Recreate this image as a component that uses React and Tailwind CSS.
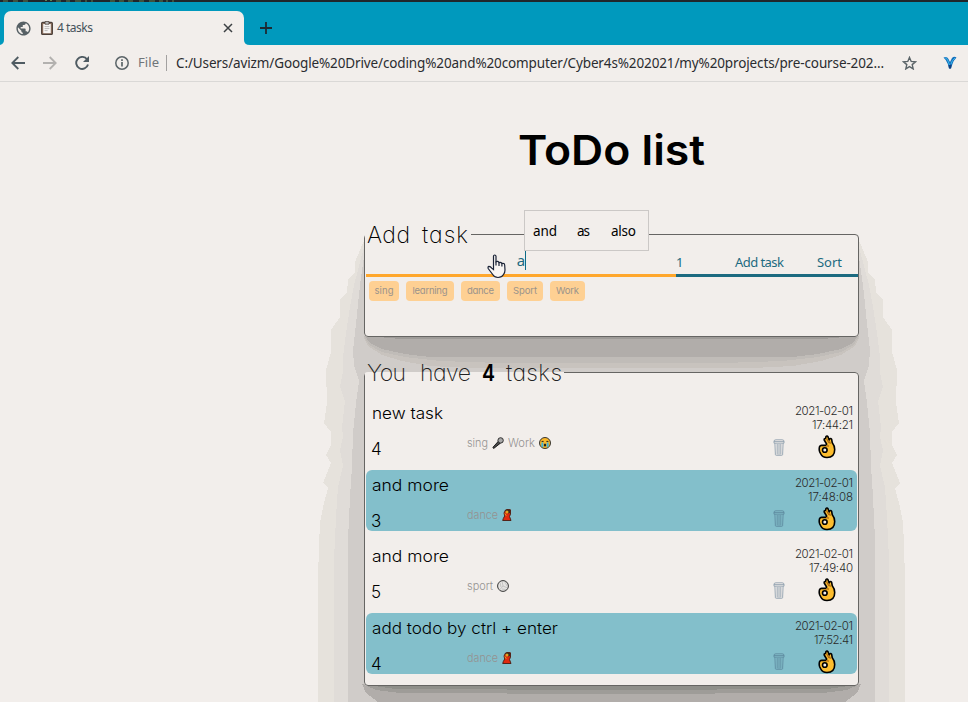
import { useLayoutEffect, useRef } from "react";
import { MdPublic } from "react-icons/md";

// Text that spreads its letters to fill a fixed width.
function Fit({ w, className = "", children }) {
  const ref = useRef(null);
  useLayoutEffect(() => {
    const el = ref.current;
    el.style.width = "auto";
    el.style.letterSpacing = "0px";
    const natural = el.getBoundingClientRect().width;
    const gaps = Math.max(1, el.textContent.length - 1);
    el.style.letterSpacing = `${(w - natural) / gaps}px`;
    el.style.width = `${w}px`;
  }, [w, children]);
  return (
    <span ref={ref} className={`inline-block shrink-0 whitespace-nowrap ${className}`}>
      {children}
    </span>
  );
}

// Text whose glyphs are widened to fill a fixed width.
function Wide({ w, className = "", children }) {
  const ref = useRef(null);
  useLayoutEffect(() => {
    const el = ref.current;
    el.style.transform = "none";
    el.style.width = "auto";
    const natural = el.getBoundingClientRect().width;
    el.style.width = `${natural}px`;
    el.style.marginRight = `${w - natural}px`;
    el.style.transform = `scaleX(${w / natural})`;
  }, [w, children]);
  return (
    <span ref={ref} className={`inline-block shrink-0 origin-left whitespace-nowrap ${className}`}>
      {children}
    </span>
  );
}

function Clipboard() {
  return (
    <svg className="h-[14px] w-[12px] shrink-0" viewBox="0 0 12 14">
      <rect x=".6" y="1.4" width="10.8" height="12" rx="1" fill="#8d6f5d" stroke="#4a3f39" strokeWidth="1.1" />
      <path d="M2.2 3h7.600v9.200H2.200z" fill="#f7f5f3" />
      <path d="M3.600 5.600h4.800M3.600 7.600h4.800M3.600 9.600h3" stroke="#b5b3b1" strokeWidth=".9" />
      <path d="M4 .6h4v2.600H4z" fill="#c5c5c5" stroke="#4a3f39" strokeWidth=".8" />
    </svg>
  );
}

function Trash() {
  return (
    <svg className="h-[17px] w-[12px] opacity-60" viewBox="0 0 12 17" fill="none" stroke="#3f607c" strokeWidth=".8">
      <path d="M1 2.2Q1 .8 3 .8h6q2 0 2 1.4v2H1zM1 2.6h10M1.9 4.4l.5 11.2q0 .7 1 .7h5.2q1 0 1-.7l.5-11.2M4.2 5v10.5M6 5v10.8M7.8 5v10.5" />
    </svg>
  );
}

function OkHand() {
  return (
    <svg className="h-[24px] w-[18px]" viewBox="0 0 18 24">
      <path
        d="M8 1.500Q9 .3 10 1.800L11.200 5l.4-1Q12.700 3 13.600 4.200l.7 3.600q2.400 3 2.400 6.700 0 8-7.700 8-4.600 0-6.200-3.500L1.600 16.600q-.8-2.400 0-5 .5-1.200 2-1.200h4.600L8.600 9 6.200 5Q6 3.400 7.500 3.500z"
        fill="#fdbd2e" stroke="#000" strokeWidth="1.600" strokeLinejoin="round"
      />
      <path d="M8.600 3.800 11 8M11.400 6.200l1 2.600M8 10.600l3 .6" stroke="#b06a12" strokeWidth="1.300" fill="none" />
      <circle cx="6.800" cy="15" r="2.300" fill="#f1edea" stroke="#000" strokeWidth="1.600" />
    </svg>
  );
}

function Mic() {
  return (
    <svg className="size-[12px]" viewBox="0 0 12 12">
      <path d="M7 3.600 1 10.200q-.3 1 .8 1.200L8.600 6z" fill="#4b4b4b" stroke="#111" strokeWidth=".9" />
      <circle cx="8.600" cy="3.400" r="2.700" fill="#a9a9a9" stroke="#222" strokeWidth=".9" />
    </svg>
  );
}

function Cry() {
  return (
    <svg className="size-[12px]" viewBox="0 0 12 12">
      <circle cx="6" cy="6" r="5.500" fill="#fbb829" stroke="#222" strokeWidth=".9" />
      <path d="M2.600 4.400h2M7.400 4.400h2" stroke="#222" strokeWidth="1" />
      <path d="M2.400 5.400h1.900v5.200L2.400 9.800zM7.700 5.400h1.900v4.400l-1.900.8z" fill="#3bb5df" />
      <ellipse cx="6" cy="8" rx="1.200" ry="1.600" fill="#222" />
    </svg>
  );
}

function Dancer() {
  return (
    <svg className="h-[12px] w-[10px]" viewBox="0 0 10 12">
      <path d="M.7 11.500q.3-2 2-4.500L2 4l1.500-3Q6.200-.2 8.500.8V5L7.500 7.500l1.500 4z" fill="#e0290f" stroke="#4a1a10" strokeWidth=".9" />
      <path d="M3 1.800q2-2.400 5-.6v2.800L6 4.600z" fill="#3a2b1c" />
      <circle cx="5" cy="2.900" r="1.500" fill="#e6a31e" />
      <path d="m2.800 4.600 1.500 2.200" stroke="#e6a31e" />
    </svg>
  );
}

function Ball() {
  return (
    <svg className="size-[12px]" viewBox="0 0 12 12" fill="none">
      <circle cx="6" cy="6" r="5.400" fill="#e6e4e2" stroke="#333" />
      <path d="M6 6 5 1M6 6l4.500 2M6 6l-3.500 4M3 2.500 4 7M8 2l2 4M9 9.500 5 9" stroke="#b5b5b5" strokeWidth=".7" />
    </svg>
  );
}

const OUTER =
  "M365 238 355 262 355 272 348 280 347 292 340 300 340 317 331 330 331 352 326 370 327 403 324 423 331 432 331 445 326 455 331 463 323 483 328 488 323 507 320 523 319 545 318 580 318 702 612 702 612 238z";
const MIDDLE =
  "M365 243 358 270 354 285 350 307 346 333 343 357 343 372 340 387 345 401 342 427 343 437 340 450 343 466 338 487 336 517 334 560 334 702 612 702 612 243z";
const INNER =
  "M365 250 360 285 355 333 353 350 354 365 359 381 356 403 353 433 352 466 350 497 348 540 348 702 612 702 612 250z";

function ShadowHalf() {
  return (
    <>
      <path d={OUTER} fill="#e6e2dc" />
      <path d={MIDDLE} fill="#e0dcd8" />
      <path d={INNER} fill="#d0ccc9" />
      <path d="M364 338 368 346 382 355 402 361 430 366 470 368 612 368V336H364z" fill="#c8c3be" />
      <path d="M364 336 369 345 382 352 405 357 440 361 500 363 612 363V336z" fill="#c0bcb8" />
      <path d="M365 336 370 343 382 349 405 354 430 357 612 357V336z" fill="#b1adaa" />
      <path d="M368 336 400 339 612 339.500V336z" fill="#9e9b98" />
      <path d="M362 684 366 693 378 702H612V684z" fill="#b1adaa" />
      <path d="M365 685 376 690 400 693 612 694V685z" fill="#9e9c98" />
      <path d="M368 685 395 689 612 690V685z" fill="#8f8f8a" />
    </>
  );
}

function Shadows() {
  return (
    <svg className="absolute left-0 top-0 h-[702px] w-[968px]" viewBox="0 0 968 702" shapeRendering="crispEdges">
      <ShadowHalf />
      <g transform="translate(1223 0) scale(-1 1)">
        <ShadowHalf />
      </g>
    </svg>
  );
}

function Browser() {
  return (
    <header className="relative font-['Noto_Sans',sans-serif]">
      <div className="flex h-[2px] bg-[#20262b]">
        <svg className="h-[2px] w-[180px]" viewBox="0 0 180 2" stroke="#5f7f52" strokeWidth="1.200">
          <path d="M3 1h5M13 1h5M23 1h5M45 .5h2M50 .5h2M56 1h5M66 1h4M75 1h6M85 1h2M91 1h2M110 1h5M119 1h5M128 1h5M139 1h5M149 1h6M159 1h4M166 1h2M172 1h2" />
        </svg>
      </div>
      <div className="flex h-[43px] items-end bg-[#0099bd]">
        <svg className="h-[5px] w-[4px]" viewBox="0 0 4 5"><path d="M4 0Q4 4 0 5h4z" fill="#f2eeeb" /></svg>
        <div className="flex h-[34px] w-[240px] items-center rounded-t-[7px] bg-[#f2eeeb] pl-[11px] pr-[11px]">
          <MdPublic className="size-[17px] shrink-0 text-[#566065]" />
          <div className="ml-[9px] flex"><Clipboard /></div>
          <Fit w={36} className="ml-[4px] text-[12px] leading-4 text-[#45525a]">4 tasks</Fit>
          <svg className="ml-auto size-[10px]" viewBox="0 0 10 10"><path d="m1 1 8 8M9 1 1 9" stroke="#3c4043" strokeWidth="1.500" /></svg>
        </div>
        <svg className="h-[5px] w-[6px]" viewBox="0 0 6 5"><path d="M0 0Q0 5 6 5H0z" fill="#f2eeeb" /></svg>
        <svg className="mb-[11px] ml-[10px] size-[12px]" viewBox="0 0 12 12"><path d="M6 0v12M0 6h12" stroke="#1c2b33" strokeWidth="1.800" /></svg>
      </div>
      <div className="flex h-[37px] items-center border-b border-[#dad8d6] bg-[#f2eeeb] pl-[11px] text-[13px]">
        <svg className="size-[14px]" viewBox="0 0 14 14" fill="none" stroke="#4f5b62" strokeWidth="1.800"><path d="M14 7H1.500M7.300 1 1.300 7l6 6" /></svg>
        <svg className="ml-[18px] size-[14px]" viewBox="0 0 14 14" fill="none" stroke="#b3b1af" strokeWidth="1.800"><path d="M0 7h12.500M6.700 1l6 6-6 6" /></svg>
        <svg className="ml-[18px] size-[14px]" viewBox="0 0 14 14" fill="none"><path d="M12 3.300A6 6 0 1 0 13 8.500" stroke="#4f5b62" strokeWidth="1.900" /><path d="M14 0v6H8z" fill="#4f5b62" /></svg>
        <svg className="ml-[26px] size-[14px]" viewBox="0 0 14 14" fill="none" stroke="#5b6468" strokeWidth="1.500"><circle cx="7" cy="7" r="6.200" /><path d="M7 6v4.500M7 3.300v1.600" strokeWidth="1.700" /></svg>
        <Fit w={21} className="ml-[9px] text-[#6f7579]">File</Fit>
        <div className="ml-[7px] h-[16px] w-px bg-[#a3a1a0]" />
        <Fit w={708} className="ml-[9px] text-[13.500px] text-[#2a2c30]">
          C:/Users/avizm/Google%20Drive/coding%20and%20computer/Cyber4s%202021/my%20projects/pre-course-202...
        </Fit>
        <svg className="ml-[18px] h-[14px] w-[15px]" viewBox="0 0 15 14" fill="none" stroke="#5b6468" strokeWidth="1.400"><path d="m7.500 1.400 1.700 4 4.300.4-3.300 2.800 1 4.300-3.700-2.300-3.700 2.300 1-4.300L1.500 5.800l4.300-.4z" /></svg>
        <svg className="ml-[26px] size-[14px]" viewBox="0 0 14 14"><path d="M.5 1.500Q4 0 5.500 3L7 6l2-4q2-2 4.500-.5Q10 5 9.300 8.500L8 12.500H6L4.800 8Q3.500 4 .5 1.500z" fill="#1670bd" /><path d="M2 1.800Q4 2 5 5l1.500 4M12 2Q9 4 8 8" stroke="#39b7ea" fill="none" /><path d="M5.500 9h3L8 12.500H6z" fill="#123f7c" /></svg>
      </div>
    </header>
  );
}

const CHIPS = [
  { name: "sing", box: "w-[30px]", w: 19 },
  { name: "learning", box: "w-[48px]", w: 35 },
  { name: "dance", box: "w-[39px]", w: 27 },
  { name: "Sport", box: "w-[36px]", w: 24 },
  { name: "Work", box: "w-[35px]", w: 23 },
];

const TASKS = [
  { title: "new task", w: 71, n: "4", time: "17:44:21", tw: 41, tags: [["sing", 21, Mic], ["Work", 27, Cry]], tone: "" },
  { title: "and more", w: 77, n: "3", time: "17:48:08", tw: 45, tags: [["dance", 31, Dancer]], tone: "bg-[#83bfcb]" },
  { title: "and more", w: 77, n: "5", time: "17:49:40", tw: 44, tags: [["sport", 26, Ball]], tone: "" },
  { title: "add todo by ctrl + enter", w: 186, n: "4", time: "17:52:41", tw: 39, tags: [["dance", 31, Dancer]], tone: "bg-[#83bfcb]" },
];

function Task({ task }) {
  return (
    <li className={`flex h-[61px] justify-between rounded-[6px] pl-[5px] pr-[4px] ${task.tone}`}>
      <div className="flex flex-col items-start">
        <Wide w={task.w} className="ml-px h-[30px] text-[16px] leading-[30px] text-black">{task.title}</Wide>
        <div className="flex">
          <span className="mt-[6px] w-[96px] text-[17px] leading-[31px] text-black">{task.n}</span>
          <div className="mt-[7px] flex h-4 items-center gap-[4px] text-[11px] text-[#949291]">
            {task.tags.map(([name, w, Icon]) => (
              <div key={name} className="flex items-center gap-[4px]">
                <Wide w={w} className="leading-4">{name}</Wide>
                <Icon />
              </div>
            ))}
          </div>
        </div>
      </div>
      <div className="flex flex-col items-end pt-[6px] text-[11.500px] leading-[14px] text-[#2a2a2a]">
        <Fit w={58}>2021-02-01</Fit>
        <Fit w={task.tw}>{task.time}</Fit>
        <div className="mr-[17px] mt-[3px] flex items-center gap-[33px]">
          <Trash />
          <OkHand />
        </div>
      </div>
    </li>
  );
}

export default function App() {
  return (
    <div className="relative h-[702px] w-[968px] overflow-hidden bg-[#f2eeeb] font-['Inter',sans-serif]">
      <Shadows />
      <Browser />
      <main className="relative ml-[364px] flex w-[495px] flex-col">
        <h1 className="mt-[44px] flex h-[48px] justify-center text-[41px] font-semibold leading-[48px] text-black">
          <Wide w={187}>ToDo list</Wide>
        </h1>

        <fieldset className="relative mt-[44px] h-[119px] rounded-[4px] border border-[#666563] bg-[#f2eeeb]">
          <legend className="flex h-[32px] gap-[12px] pl-[2px] pr-[3px] text-[23px] font-extralight leading-[35px] text-black [font-feature-settings:'cv11']">
            <Fit w={43}>Add</Fit>
            <Fit w={46}>task</Fit>
          </legend>
          <div className="ml-px flex h-[27px] pt-px font-['Noto_Sans',sans-serif] text-[13px] leading-[23px] text-[#1c6a80]">
            <div className="flex w-[310px] justify-center border-b-[3px] border-[#ffa72c] pl-[1px] text-[15px]">
              <span className="flex h-[19px] border-r border-[#0f6b87] leading-[19px]">a</span>
            </div>
            <div className="flex flex-1 border-b-[3px] border-[#1c6a80]">
              <span className="w-[59px]">1</span>
              <Fit w={49}>Add task</Fit>
              <Fit w={25} className="ml-[33px]">Sort</Fit>
            </div>
          </div>
          <div className="ml-[4px] mt-[4px] flex gap-[7px]">
            {CHIPS.map((c) => (
              <div key={c.name} className={`flex h-[20px] items-center justify-center rounded-[4px] bg-[#fed093] text-[9.500px] text-[#9a938b] [font-feature-settings:'cv11'] ${c.box}`}>
                <Fit w={c.w}>{c.name}</Fit>
              </div>
            ))}
          </div>
          <div className="absolute left-[159px] top-[-40px] flex h-[41px] w-[125px] border border-[#cbc8c6] bg-[#f2eeeb] pl-[8px] font-['Noto_Sans',sans-serif] text-[13.500px] leading-[41px] text-black">
            <Fit w={24}>and</Fit>
            <Fit w={13} className="ml-[20px]">as</Fit>
            <Fit w={25} className="ml-[21px]">also</Fit>
          </div>
          <svg className="absolute left-[122px] top-[4px] h-[25px] w-[20px]" viewBox="0 0 20 25">
            <path d="M6.500 15.500V2.300Q6.500 1 7.700 1T9 2.300v5.500q2-1.100 3 .8 2-.7 2.800.8 2.700-.5 2.900 1.800l.3 4.800q0 2.500-1.500 4.500-1.700 3-5.500 3-3.500 0-5.300-3l-4.500-6q-.6-2 .8-2.200 1.600 0 2.700 1.800z" fill="#f8f5f3" stroke="#1b2337" strokeWidth="1.200" />
            <path d="M9 7.500v4M12 8.500v3.500M14.900 9.500v3" stroke="#1b2337" strokeWidth="1.200" />
          </svg>
        </fieldset>

        <fieldset className="mt-[19px] h-[330px] rounded-[4px] border border-[#666563] bg-[#f2eeeb]">
          <legend className="flex h-[32px] pl-[2px] pr-[2px] text-[23px] font-extralight leading-[35px] text-[#222] [font-feature-settings:'cv11']">
            <Fit w={39}>You</Fit>
            <Fit w={51} className="ml-[14px]">have</Fit>
            <Wide w={13} className="ml-[11px] font-semibold text-black">4</Wide>
            <Fit w={56} className="ml-[11px]">tasks</Fit>
          </legend>
          <ul className="mx-px mt-[10px] flex flex-col gap-[10.600px] font-light">
            {TASKS.map((t) => <Task key={t.time} task={t} />)}
          </ul>
        </fieldset>
      </main>
    </div>
  );
}
